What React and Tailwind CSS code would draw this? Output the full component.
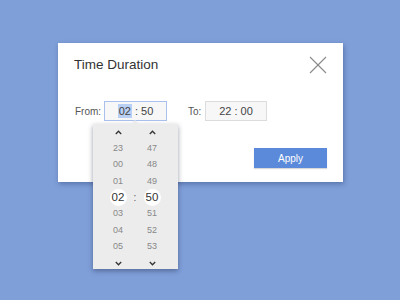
import React from 'react';

const hours = ['23', '00', '01', '02', '03', '04', '05'];
const minutes = ['47', '48', '49', '50', '51', '52', '53'];

function Chevron({ down }) {
    return (
        <svg width="7" height="5" viewBox="0 0 7 5" className="block">
            <polyline
                points={down ? '0.8,1 3.5,3.8 6.2,1' : '0.8,4 3.5,1.2 6.2,4'}
                fill="none"
                stroke="#333"
                strokeWidth="1.3"
            />
        </svg>
    );
}

function Cell({ value, selected }) {
    return (
        <div className="h-[16.3px] flex items-center justify-center">
            {selected ? (
                <span className="w-[17px] h-[17px] rounded-full bg-white flex items-center justify-center text-[11.5px] text-[#333]">
                    {value}
                </span>
            ) : (
                <span className="text-[9px] text-[#888]">{value}</span>
            )}
        </div>
    );
}

export default function App() {
    return (
        <div
            className="relative w-[400px] h-[300px] bg-[#7f9fd9] overflow-hidden pt-[43px] pl-[58px]"
            style={{ fontFamily: '"Liberation Sans", Arial, sans-serif' }}
        >
            {/* dialog */}
            <div className="relative w-[285px] h-[139px] bg-white shadow-[1px_2px_5px_rgba(40,60,110,0.45)]">
                <div className="flex items-start justify-between pl-[16px] pr-[16px] pt-[13px]">
                    <h1 className="text-[13.5px] leading-[18px] text-[#333]">Time Duration</h1>
                    <svg width="18" height="18" viewBox="0 0 18 18">
                        <line x1="1" y1="1" x2="17" y2="17" stroke="#8a8a8a" strokeWidth="1.1" />
                        <line x1="17" y1="1" x2="1" y2="17" stroke="#8a8a8a" strokeWidth="1.1" />
                    </svg>
                </div>

                <div className="flex items-center mt-[27px] pl-[17px]">
                    <span className="text-[10px] text-[#555] w-[29px]">From:</span>
                    <div className="w-[63px] h-[20px] border border-[#a9c1ec] bg-[#f7f7f7] flex items-center justify-center text-[11px] text-[#444]">
                        <span className="bg-[#b9cff3] px-[1px] leading-[14px]">02</span>
                        <span className="mx-[3px]">:</span>
                        <span>50</span>
                    </div>
                    <span className="text-[10px] text-[#555] ml-[21px] w-[17px]">To:</span>
                    <div className="w-[62px] h-[20px] border border-[#dcdcdc] bg-[#f7f7f7] flex items-center justify-center text-[11px] text-[#444]">
                        22 : 00
                    </div>
                </div>

                <div className="flex justify-end pr-[16px] mt-[27px]">
                    <button className="w-[73px] h-[20px] bg-[#5b8ada] text-white text-[10px] shadow-[0_1px_1px_rgba(0,0,0,0.15)]">
                        Apply
                    </button>
                </div>
            </div>

            {/* picker dropdown */}
            <div className="absolute left-[93px] top-[124px] w-[85px] h-[145px] bg-[#ececec] shadow-[0_2px_5px_rgba(30,40,70,0.45)]">
                <div className="absolute left-[38px] top-[-4px] w-0 h-0 border-l-[4px] border-r-[4px] border-b-[4px] border-l-transparent border-r-transparent border-b-[#ececec]" />
                <div className="grid grid-cols-[28px_6px_28px] ml-[11px] mt-[0.5px]">
                    <div className="flex flex-col">
                        <div className="h-[16.3px] flex items-center justify-center"><Chevron /></div>
                        {hours.map((h) => <Cell key={h} value={h} selected={h === '02'} />)}
                        <div className="h-[16.3px] flex items-center justify-center"><Chevron down /></div>
                    </div>
                    <div className="flex flex-col">
                        <div className="h-[65.2px]" />
                        <div className="h-[16.3px] flex items-center justify-center text-[10px] text-[#555]">:</div>
                    </div>
                    <div className="flex flex-col">
                        <div className="h-[16.3px] flex items-center justify-center"><Chevron /></div>
                        {minutes.map((m) => <Cell key={m} value={m} selected={m === '50'} />)}
                        <div className="h-[16.3px] flex items-center justify-center"><Chevron down /></div>
                    </div>
                </div>
            </div>
        </div>
    );
}
